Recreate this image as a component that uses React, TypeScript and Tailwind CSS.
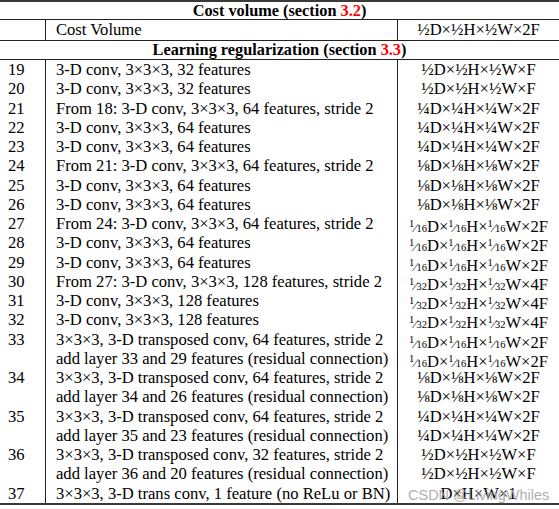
import React from "react";

type Line = { n?: string; desc: string; out: React.ReactNode };

const Frac = ({ d }: { d: string }) => (
  <span className="inline-block">
    <span className="text-[10.5px] align-[5px]">1</span>
    <span className="text-[13px]">⁄</span>
    <span className="text-[10.5px]">{d}</span>
  </span>
);

const dims = (f: React.ReactNode, tail: string) => (
  <>
    {f}D×{f}H×{f}W×{tail}
  </>
);

const half = (t: string) => dims("½", t);
const quarter = (t: string) => dims("¼", t);
const eighth = (t: string) => dims("⅛", t);
const sixteenth = (t: string) => dims(<Frac d="16" />, t);
const thirtysecond = (t: string) => dims(<Frac d="32" />, t);

const conv = (f: number) => `3-D conv, 3×3×3, ${f} features`;
const from = (l: number, f: number) => `From ${l}: 3-D conv, 3×3×3, ${f} features, stride 2`;
const trans = (f: number) => `3×3×3, 3-D transposed conv, ${f} features, stride 2`;
const add = (a: number, b: number) => `add layer ${a} and ${b} features (residual connection)`;

const lines: Line[] = [
  { n: "19", desc: conv(32), out: half("F") },
  { n: "20", desc: conv(32), out: half("F") },
  { n: "21", desc: from(18, 64), out: quarter("2F") },
  { n: "22", desc: conv(64), out: quarter("2F") },
  { n: "23", desc: conv(64), out: quarter("2F") },
  { n: "24", desc: from(21, 64), out: eighth("2F") },
  { n: "25", desc: conv(64), out: eighth("2F") },
  { n: "26", desc: conv(64), out: eighth("2F") },
  { n: "27", desc: from(24, 64), out: sixteenth("2F") },
  { n: "28", desc: conv(64), out: sixteenth("2F") },
  { n: "29", desc: conv(64), out: sixteenth("2F") },
  { n: "30", desc: from(27, 128), out: thirtysecond("4F") },
  { n: "31", desc: conv(128), out: thirtysecond("4F") },
  { n: "32", desc: conv(128), out: thirtysecond("4F") },
  { n: "33", desc: trans(64), out: sixteenth("2F") },
  { desc: add(33, 29), out: sixteenth("2F") },
  { n: "34", desc: trans(64), out: eighth("2F") },
  { desc: add(34, 26), out: eighth("2F") },
  { n: "35", desc: trans(64), out: quarter("2F") },
  { desc: add(35, 23), out: quarter("2F") },
  { n: "36", desc: trans(32), out: half("F") },
  { desc: add(36, 20), out: half("F") },
  { n: "37", desc: "3×3×3, 3-D trans conv, 1 feature (no ReLu or BN)", out: "D×H×W×1" },
];

const App = () => {
  return (
    <div className="relative h-[509px] w-[559px] bg-white text-[16.6px] text-black font-['Liberation_Serif',serif]">
      <div className="border-t-2 border-b-2 border-[#3a3a3a]">
        <div className="h-[18px] border-b border-[#222] text-center text-[16.3px] font-bold leading-[17px]">
          Cost volume (section <span className="text-[#ff0000]">3.2</span>)
        </div>
        <div className="grid h-[21px] grid-cols-[46px_352px_1fr] border-b border-[#222] leading-[19px]">
          <div className="border-r border-[#222]" />
          <div className="border-r border-[#222] pl-[10px]">Cost Volume</div>
          <div className="text-center">{half("2F")}</div>
        </div>
        <div className="h-[19px] border-b border-[#222] text-center text-[16.3px] font-bold leading-[17px]">
          Learning regularization (section <span className="text-[#ff0000]">3.3</span>)
        </div>
        <div className="flex flex-col">
          {lines.map((l, i) => (
            <div key={i} className="grid h-[19.25px] grid-cols-[46px_352px_1fr] leading-[19.25px] whitespace-nowrap">
              <div className="border-r border-[#222] pl-[8px]">{l.n}</div>
              <div className="border-r border-[#222] pl-[10px]">{l.desc}</div>
              <div className="text-center">{l.out}</div>
            </div>
          ))}
        </div>
      </div>
      <div className="absolute left-[408px] top-[485px] font-['Liberation_Sans',sans-serif] text-[14.5px] text-[#a8a8a8] opacity-90">
        CSDN @LivingWhiles
      </div>
    </div>
  );
};

export default App;
